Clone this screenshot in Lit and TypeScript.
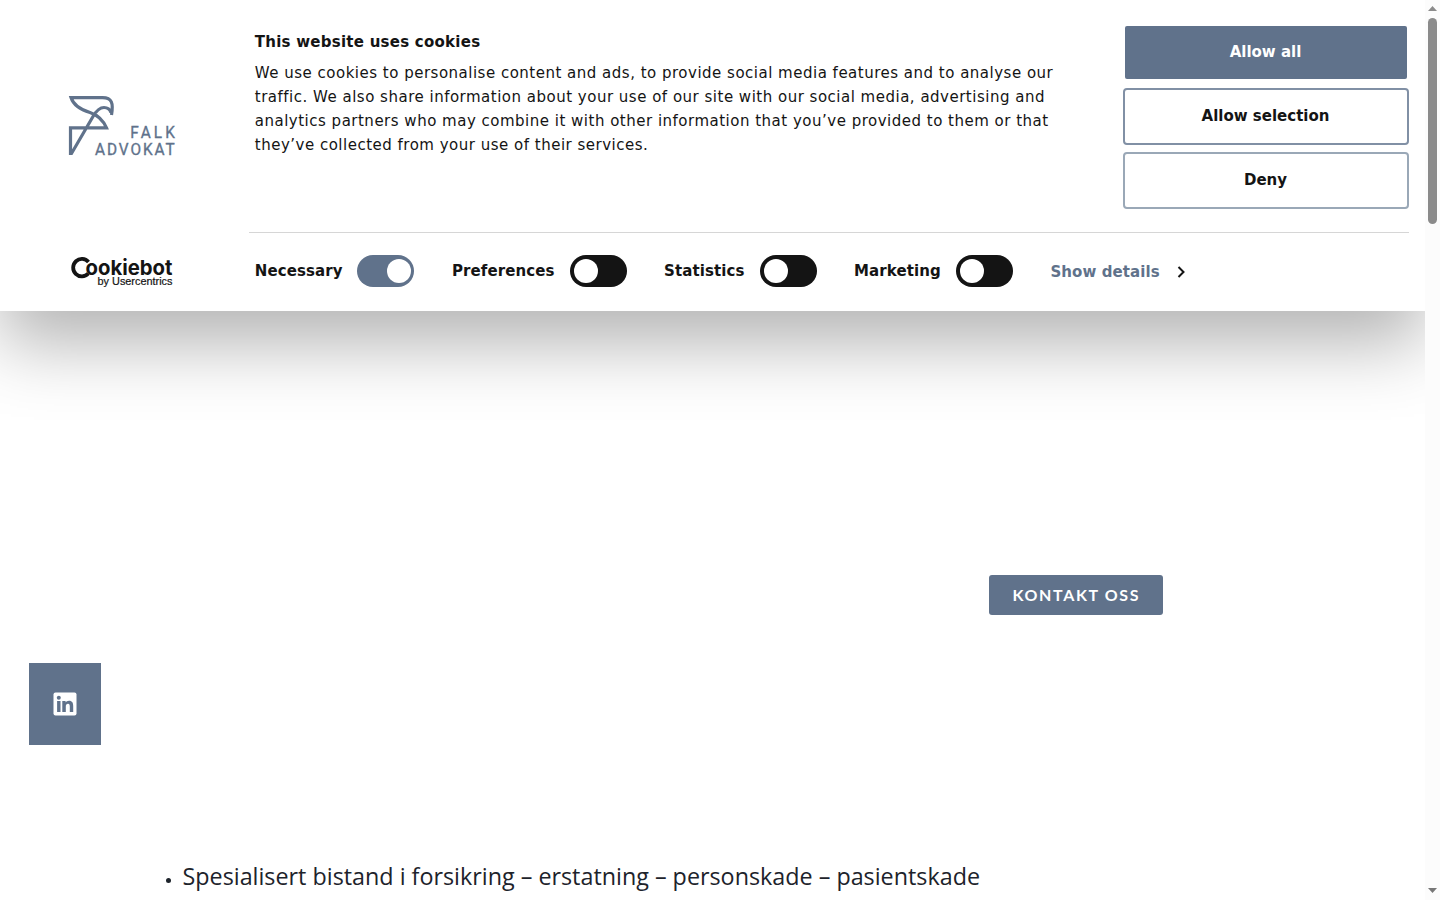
import { LitElement, html, css } from "lit";
import { customElement, property } from "lit/decorators.js";

@customElement("consent-toggle")
class ConsentToggle extends LitElement {
  @property() label = "";
  @property({ type: Boolean }) on = false;
  @property({ type: Number }) labelWidth = 88;

  static styles = css`
    :host { display: flex; align-items: center; }
    .label { font: 700 15px/24px "DejaVu Sans", sans-serif; color: #141414; white-space: nowrap; letter-spacing: 0.1px; }
    .track { box-sizing: border-box; width: 57px; height: 32px; border-radius: 16px; background: #141414; padding: 4px; display: flex; }
    .track.on { background: #60728b; justify-content: flex-end; padding-right: 3px; }
    .knob { width: 24px; height: 24px; border-radius: 50%; background: #fff; }
  `;

  render() {
    return html`
      <span class="label" style="width:${this.labelWidth}px">${this.label}</span>
      <span class="track ${this.on ? "on" : ""}"><span class="knob"></span></span>
    `;
  }
}

@customElement("app-root")
class AppRoot extends LitElement {
  static styles = css`
    :host { display: flex; width: 1440px; height: 900px; overflow: hidden; background: #fff; font-family: "DejaVu Sans", sans-serif; color: #141414; }
    .page { width: 1425px; height: 900px; overflow: hidden; display: flex; flex-direction: column; }
    .banner { box-sizing: border-box; height: 311px; flex: none; display: flex; background: #fff; box-shadow: 0 32px 68px rgba(0, 0, 0, 0.3); }
    .brand { width: 249px; flex: none; display: flex; flex-direction: column; }
    .logo { display: block; margin: 92px 0 0 64px; }
    .powered { display: block; margin: 92px 0 0 66px; }
    .main { width: 1160px; flex: none; }
    .top { box-sizing: border-box; height: 233px; border-bottom: 1px solid #d6d6d6; display: flex; justify-content: space-between; }
    .copy { padding: 30px 0 0 5.8px; }
    h2 { margin: 0; font-size: 15px; line-height: 24px; font-weight: 700; letter-spacing: 0.25px; }
    p { margin: 7px 0 0; font-size: 15px; line-height: 24px; letter-spacing: 0.5px; white-space: nowrap; }
    .buttons { width: 286px; padding-top: 24px; display: flex; flex-direction: column; gap: 7px; }
    button { box-sizing: border-box; height: 57px; margin: 0; padding: 0 1px 2px 0; border: 2px solid #8190a5; border-radius: 4px; background: #fff; color: #141414; font: 700 15px "DejaVu Sans", sans-serif; }
    button.primary { background: #60728b; color: #fff; border: 0; margin: 2px; height: 53px; border-radius: 2px; }
    button.deny { border-color: #9aa8b7; }
    .choices { height: 76px; display: flex; align-items: center; padding-left: 5.8px; }
    .choices consent-toggle { margin-right: 37px; }
    .choices consent-toggle:first-child { margin-right: 38.2px; }
    .details { display: flex; align-items: center; color: #60728b; font-size: 15px; font-weight: 700; line-height: 24px; letter-spacing: 0.1px; padding: 2px 0 0 0.4px; white-space: nowrap; gap: 16px; }
    .content { flex: 1; display: flex; flex-direction: column; }
    .contact { margin: 264px 0 0 989px; width: 174px; height: 40px; border-radius: 3px; background: #60728b; display: block; }
    .social { margin: 48px 0 0 29px; width: 72px; height: 82px; background: #60728b; display: flex; align-items: center; justify-content: center; }
    .points { margin: 113px 0 0 166px; display: flex; align-items: center; gap: 11px; height: 36px; color: #1d232b; }
    .dot { width: 5px; height: 5px; border-radius: 50%; background: #1d232b; margin-top: 8px; }
    .points text { font-family: "Open Sans", sans-serif; }
    .contact text { font-family: Lato, sans-serif; }
    .scroll { width: 15px; height: 900px; background: #fcfcfc; display: flex; flex-direction: column; align-items: center; }
    .up { margin-top: 6px; }
    .thumb { width: 9px; height: 206px; border-radius: 5px; background: #8b8b8b; margin-top: 7px; }
    .down { margin-top: auto; margin-bottom: 7px; }
    svg { display: block; flex: none; }
  `;

  render() {
    return html`
      <div class="page">
        <section class="banner">
          <div class="brand">
            <svg class="logo" width="116" height="68" viewBox="64 92 116 68" fill="none" stroke="#60728b">
              <path stroke-width="3.200" stroke-linejoin="miter" d="M111.500 115C113.500 103 112 97.600 102.500 97.600H71C74 107 83 110.500 90 112.500C99 115.500 103.500 121 106.500 127.900H70.500V153.500H71.500L93 116.500C96.500 110.500 99.500 107.500 104 107.500C108 107.500 110 109.500 111 112.500"></path>
              <g fill="#60728b" stroke="#60728b" stroke-width="0.350" font-family="Roboto, sans-serif" font-size="16">
                <text transform="translate(130.300 138) scale(0.96 1)" textLength="46.500" lengthAdjust="spacing">FALK</text>
                <text transform="translate(95 155) scale(0.96 1)" textLength="83" lengthAdjust="spacing">ADVOKAT</text>
              </g>
            </svg>
            <svg class="powered" width="112" height="38" viewBox="66 252 112 38">
              <path d="M88.500 262A8.700 8.700 0 1 0 88.300 273.500" fill="none" stroke="#141414" stroke-width="3.800"></path>
              <text x="85.500" y="274.500" font-family="Inter, sans-serif" font-weight="700" font-size="20.500" textLength="87" lengthAdjust="spacingAndGlyphs" fill="#141414">ookiebot</text>
              <text x="97.500" y="285" font-family="Liberation Sans, sans-serif" font-size="10.500" textLength="75" lengthAdjust="spacingAndGlyphs" fill="#141414" stroke="#141414" stroke-width="0.200">by Usercentrics</text>
            </svg>
          </div>
          <div class="main">
            <div class="top">
              <div class="copy">
                <h2>This website uses cookies</h2>
                <p>We use cookies to personalise content and ads, to provide social media features and to analyse our<br />traffic. We also share information about your use of our site with our social media, advertising and<br />analytics partners who may combine it with other information that you’ve provided to them or that<br />they’ve collected from your use of their services.</p>
              </div>
              <div class="buttons">
                <button class="primary">Allow all</button>
                <button>Allow selection</button>
                <button class="deny">Deny</button>
              </div>
            </div>
            <div class="choices">
              <consent-toggle label="Necessary" .labelWidth=${102} on></consent-toggle>
              <consent-toggle label="Preferences" .labelWidth=${118}></consent-toggle>
              <consent-toggle label="Statistics" .labelWidth=${96}></consent-toggle>
              <consent-toggle label="Marketing" .labelWidth=${102}></consent-toggle>
              <span class="details">Show details
                <svg width="10" height="12" viewBox="0 0 10 12"><path d="M2.500 1L7.500 6L2.500 11" fill="none" stroke="#141414" stroke-width="2"></path></svg>
              </span>
            </div>
          </div>
        </section>
        <main class="content">
          <svg class="contact" width="174" height="40"><text x="23.500" y="25.500" font-size="16" font-weight="700" fill="#fff" textLength="126">KONTAKT OSS</text></svg>
          <div class="social">
            <svg width="24" height="24" viewBox="0 0 24 24">
              <rect x="0.500" y="0.500" width="23" height="23" rx="2" fill="#fff"></rect>
              <g fill="#60728b"><circle cx="5.800" cy="5.800" r="2"></circle><path d="M4.100 9H7.500V20H4.100ZM9.300 9H12.600V10.500C13.300 9.400 14.500 8.700 16 8.700C19.400 8.700 20.200 11 20.200 14V20H16.800V14.700C16.800 13.200 16.700 11.700 15 11.700C13.200 11.700 12.800 13.100 12.800 14.600V20H9.300Z"></path></g>
            </svg>
          </div>
          <div class="points">
            <span class="dot"></span>
            <svg width="805" height="36"><text x="0.500" y="27" font-size="24" fill="#1d232b" textLength="797.500" lengthAdjust="spacingAndGlyphs">Spesialisert bistand i forsikring – erstatning – personskade – pasientskade</text></svg>
          </div>
        </main>
      </div>
      <div class="scroll">
        <svg class="up" width="9" height="5"><path d="M0 5L4.500 0L9 5Z" fill="#8b8b8b"></path></svg>
        <span class="thumb"></span>
        <svg class="down" width="9" height="5"><path d="M0 0L4.500 5L9 0Z" fill="#777"></path></svg>
      </div>
    `;
  }
}
